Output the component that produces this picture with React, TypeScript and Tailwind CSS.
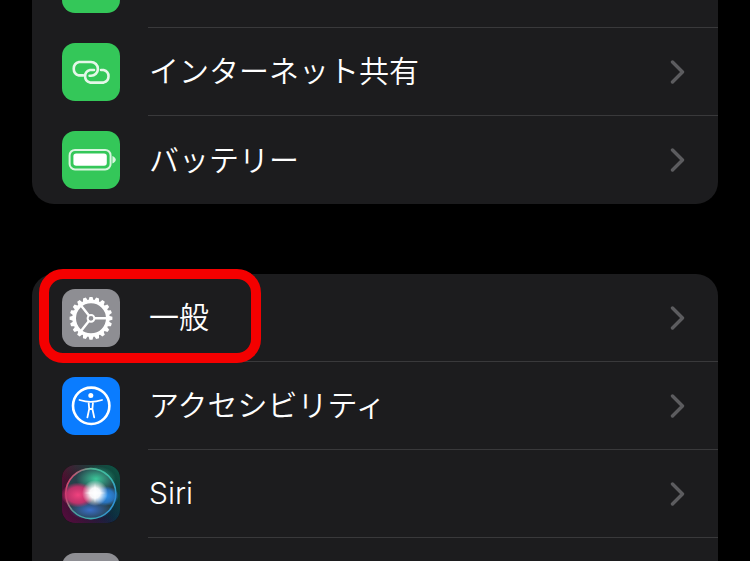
import type { ReactNode } from 'react'

function Chevron() {
  return (
    <svg width="16" height="24" viewBox="0 0 16 24" className="shrink-0" fill="none">
      <path d="M2.5 2 L12.5 12 L2.5 22" stroke="#5c5c5f" strokeWidth="3.4" strokeLinecap="round" strokeLinejoin="round" />
    </svg>
  )
}

function LinkIcon() {
  return (
    <svg width="58" height="58" viewBox="0 0 58 58" fill="none" stroke="#e4f7e8" strokeWidth="2.6" strokeLinecap="round">
      <path d="M21 32.4 H17 A6.9 6.9 0 0 1 17 19 H29 A6.9 6.9 0 0 1 29 32.8 H27.6" />
      <path d="M39 27 H41.6 A6.5 6.5 0 0 1 41.6 39.6 H28 A6.5 6.5 0 0 1 28 27 H32" />
    </svg>
  )
}

function BatteryIcon() {
  return (
    <svg width="58" height="58" viewBox="0 0 58 58">
      <rect x="7.6" y="19" width="41" height="19.4" rx="5.4" fill="none" stroke="#d9f5df" strokeWidth="2" />
      <rect x="11.4" y="22.6" width="33.4" height="12.2" rx="2.8" fill="#ffffff" />
      <path d="M50.4 25 C52.6 26 53.8 27.4 53.8 28.8 C53.8 30.2 52.6 31.6 50.4 32.6 Z" fill="#d9f5df" />
    </svg>
  )
}

function GearIcon() {
  const teeth = Array.from({ length: 20 }, (_, i) => i * 18)
  return (
    <svg width="58" height="58" viewBox="0 0 58 58" fill="none">
      <g transform="translate(29 29.3)">
        {teeth.map((a) => (
          <path key={a} d="M-2.8 -17 L-1.5 -21.4 H1.5 L2.8 -17 Z" fill="#fff" transform={`rotate(${a})`} />
        ))}
        <circle r="16.8" stroke="#fff" strokeWidth="3.6" />
        <path d="M3.4 0 H16.5 M-2.1 -2.7 L-10.4 -13.3 M-2.1 2.7 L-10.4 13.3" stroke="#fff" strokeWidth="2.4" />
        <circle r="3.4" stroke="#fff" strokeWidth="2" />
      </g>
    </svg>
  )
}

function AccessIcon() {
  return (
    <svg width="58" height="58" viewBox="0 0 58 58" fill="none">
      <circle cx="29.2" cy="28.8" r="18.2" stroke="#fff" strokeWidth="2.6" />
      <circle cx="28.8" cy="18.6" r="2.5" fill="#fff" />
      <path
        d="M17.5 23 C21 24 25 24.8 28.8 24.8 C32.6 24.8 36.6 24 40 23 M26.6 25 L27.2 32 L25.4 40.4 M31 25 L30.4 32 L32.2 40.4 M27.2 32 H30.4"
        stroke="#fff"
        strokeWidth="1.8"
        strokeLinecap="round"
      />
    </svg>
  )
}

function SiriIcon() {
  return (
    <svg width="58" height="58" viewBox="0 0 58 58">
      <defs>
        <linearGradient id="siriBg" x1="0" y1="0" x2="1" y2="1">
          <stop offset="0" stopColor="#5a1030" />
          <stop offset="0.5" stopColor="#0e1420" />
          <stop offset="1" stopColor="#0c2a48" />
        </linearGradient>
        <linearGradient id="siriTr" x1="1" y1="0" x2="0.4" y2="0.6">
          <stop offset="0" stopColor="#0f5a48" />
          <stop offset="1" stopColor="#0f5a48" stopOpacity="0" />
        </linearGradient>
        <linearGradient id="siriBl" x1="0" y1="1" x2="0.5" y2="0.5">
          <stop offset="0" stopColor="#5c0c40" />
          <stop offset="1" stopColor="#5c0c40" stopOpacity="0" />
        </linearGradient>
        <linearGradient id="siriRing" x1="0" y1="0.3" x2="1" y2="0.7">
          <stop offset="0" stopColor="#d8406c" />
          <stop offset="0.35" stopColor="#4fae90" />
          <stop offset="0.7" stopColor="#3cb8b0" />
          <stop offset="1" stopColor="#2f90d8" />
        </linearGradient>
        <radialGradient id="siriPink">
          <stop offset="0" stopColor="#f0427e" />
          <stop offset="0.65" stopColor="#d83070" stopOpacity="0.85" />
          <stop offset="1" stopColor="#d83070" stopOpacity="0" />
        </radialGradient>
        <radialGradient id="siriBlue">
          <stop offset="0" stopColor="#2f95f0" />
          <stop offset="0.65" stopColor="#2a7fd8" stopOpacity="0.8" />
          <stop offset="1" stopColor="#2a7fd8" stopOpacity="0" />
        </radialGradient>
        <radialGradient id="siriGreen">
          <stop offset="0" stopColor="#3cc79a" />
          <stop offset="1" stopColor="#3cc79a" stopOpacity="0" />
        </radialGradient>
        <radialGradient id="siriDeep">
          <stop offset="0" stopColor="#3a6fc8" />
          <stop offset="1" stopColor="#3a6fc8" stopOpacity="0" />
        </radialGradient>
        <radialGradient id="siriCore">
          <stop offset="0" stopColor="#ffffff" />
          <stop offset="0.4" stopColor="#ffffff" stopOpacity="0.95" />
          <stop offset="1" stopColor="#ffffff" stopOpacity="0" />
        </radialGradient>
      </defs>
      <rect width="58" height="58" fill="url(#siriBg)" />
      <rect width="58" height="58" fill="url(#siriTr)" />
      <rect width="58" height="58" fill="url(#siriBl)" />
      <circle cx="28.8" cy="28.6" r="25" fill="#27404a" stroke="url(#siriRing)" strokeWidth="1.6" />
      <ellipse cx="34" cy="14" rx="20" ry="13" fill="url(#siriGreen)" />
      <ellipse cx="28" cy="45" rx="21" ry="10" fill="url(#siriDeep)" />
      <ellipse cx="16" cy="30" rx="17" ry="12.5" fill="url(#siriPink)" />
      <ellipse cx="43" cy="31" rx="14" ry="10" fill="url(#siriBlue)" />
      <path d="M33 18 L34.6 26.4 L44 28 L34.6 29.6 L33 38 L31.4 29.6 L22 28 L31.4 26.4 Z" fill="#ffffff" opacity="0.4" />
      <circle cx="33" cy="28" r="13" fill="url(#siriCore)" />
    </svg>
  )
}

function Row({ icon, bg, label, last }: { icon?: ReactNode; bg: string; label?: string; last?: boolean }) {
  return (
    <div className="flex h-[88px] items-center pl-[30px]">
      <div className={`flex h-[58px] w-[58px] shrink-0 items-center justify-center overflow-hidden rounded-[13px] ${bg}`}>
        {icon}
      </div>
      <div
        className={`ml-[28px] flex h-full min-w-0 flex-1 items-center justify-between pr-[32px] ${
          last ? '' : 'border-b border-[#39393b]'
        }`}
      >
        <span className="pb-[1px] pl-[1px] text-[30px] leading-none font-[350] text-white">{label}</span>
        {label && <Chevron />}
      </div>
    </div>
  )
}

export default function App() {
  return (
    <div
      className="h-[561px] w-[750px] overflow-hidden bg-black"
      style={{ fontFamily: 'Inter, "Noto Sans CJK JP", "Noto Sans", sans-serif' }}
    >
      <div className="mt-[-60px] flex flex-col gap-[70px] pl-[32px] pr-[32px]">
        <div className="overflow-hidden rounded-[22px] bg-[#1c1c1e]">
          <Row bg="bg-[#34c759]" />
          <Row bg="bg-[#34c759]" icon={<LinkIcon />} label="インターネット共有" />
          <Row bg="bg-[#34c759]" icon={<BatteryIcon />} label="バッテリー" last />
        </div>
        <div className="relative rounded-[22px] bg-[#1c1c1e]">
          <Row bg="bg-[#8e8e93]" icon={<GearIcon />} label="一般" />
          <Row bg="bg-[#0a7cff]" icon={<AccessIcon />} label="アクセシビリティ" />
          <Row bg="bg-[#000]" icon={<SiriIcon />} label="Siri" />
          <Row bg="bg-[#8e8e93]" />
          <div className="absolute left-[7px] top-[-5px] h-[94px] w-[222px] rounded-[24px] border-[10px] border-[#f40000]" />
        </div>
      </div>
    </div>
  )
}
